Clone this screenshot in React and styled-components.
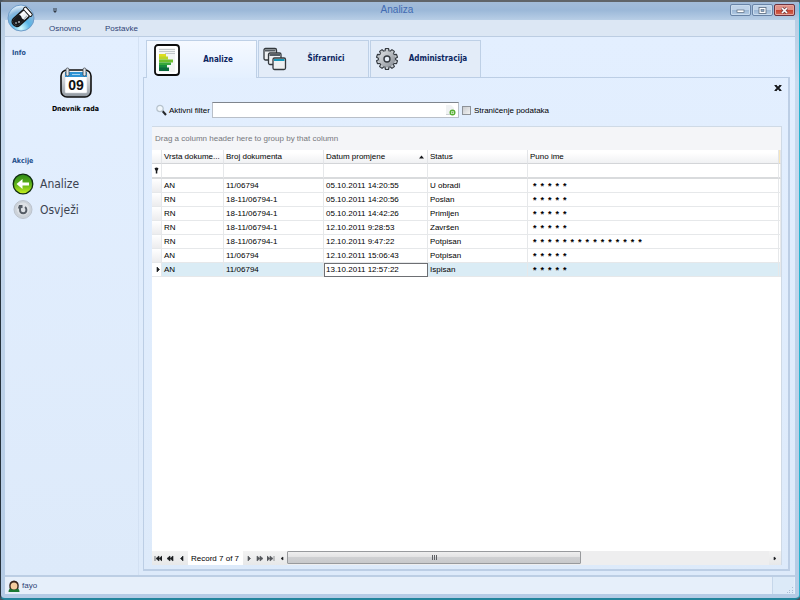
import React from "react";
import styled, { createGlobalStyle } from "styled-components";

const sans = '"Liberation Sans", Arial, sans-serif';
const tahoma = '"DejaVu Sans Condensed", "Noto Sans", sans-serif';

const Global = createGlobalStyle`
  *, *::before, *::after { box-sizing: border-box; }
  body { margin: 0; background: #4a5560; font-family: ${sans}; font-size: 8px; color: #000; }
  button, input { font: inherit; color: inherit; }
  button { background: none; border: 0; padding: 0; margin: 0; display: flex; align-items: center; }
  svg { display: block; flex: none; }
  h1, h2 { margin: 0; }
`;

const Window = styled.div`
  height: 100vh;
  display: flex;
  flex-direction: column;
  padding: 0 4px 4px 4px;
  border: 1px solid #26323c;
  border-top: 2px solid #606468;
  border-right-color: #28b4d0;
  border-bottom: 2px solid #23859c;
  border-radius: 5px;
  background: linear-gradient(#a4bfdb 0, #b8cde3 18px, #c8daee 80px, #b4cbe5 100%);
`;

const TitleBar = styled.header`
  position: relative;
  display: flex;
  justify-content: center;
  height: 18px;
  margin: 0 -4px;
  padding: 1px 10px 3px 4px;
  background: linear-gradient(#a3bcd8, #9bb8d8 45%, #b8cee6);
`;

const Title = styled.h1`
  font-size: 10px;
  line-height: 14px;
  font-weight: 400;
  color: #426bb2;
`;

const Orb = styled.button`
  position: absolute;
  left: 6px;
  top: 2px;
`;

const QuickMenu = styled.button`
  position: absolute;
  left: 51px;
  top: 6px;
`;

const Controls = styled.div`
  position: absolute;
  right: 4px;
  top: 2px;
  display: flex;
  gap: 1px;
`;

const ControlButton = styled.button`
  width: 21px;
  height: 12px;
  justify-content: center;
  border: 1px solid ${(p) => (p.$danger ? "#6e3440" : "#6984a7")};
  border-radius: 2px;
  box-shadow: inset 0 0 0 1px ${(p) => (p.$danger ? "#e6a59c" : "#c9dbed")};
  background: ${(p) =>
    p.$danger
      ? "linear-gradient(#df9187 45%, #c4402f 50%, #d56a54)"
      : "linear-gradient(#bed2e8 45%, #9bb6d4 50%, #b3cce6)"};
`;

const Menu = styled.nav`
  display: flex;
  gap: 24px;
  height: 17px;
  padding-left: 44px;
  border-bottom: 1px solid #bccde2;
  background: #dce7f4;
`;

const MenuItem = styled.button`
  padding-top: 2px;
  line-height: 14px;
  color: #2d4274;
`;

const Content = styled.div`
  flex: 1;
  min-height: 0;
  display: flex;
  background: linear-gradient(#e3efff, #ddeafa);
`;

const Sidebar = styled.aside`
  width: 134px;
  flex: none;
  padding: 11px 0 0 7px;
  border-right: 1px solid #d3e1f3;
`;

const GroupTitle = styled.h2`
  font: 700 7px/10px ${tahoma};
  color: #24508c;
`;

const DiaryButton = styled.button`
  flex-direction: column;
  gap: 5px;
  width: 127px;
  margin: 9px 0 42px;
  font: 700 7px/10px ${tahoma};
  color: #000;
`;

const ActionButton = styled.button`
  gap: 6px;
  height: 26px;
  font: 400 12px/16px ${tahoma};
  color: #3c4350;
`;

const ActionList = styled.div`
  padding-top: 5px;
`;

const Main = styled.main`
  flex: 1;
  min-width: 0;
  display: flex;
  flex-direction: column;
  padding: 3px 5px 4px 4px;
`;

const Tabs = styled.div`
  display: flex;
  gap: 1px;
  padding-left: 3px;
`;

const Tab = styled.button`
  position: relative;
  width: 111px;
  height: ${(p) => (p.$active ? "38px" : "37px")};
  margin-bottom: ${(p) => (p.$active ? "-1px" : "0")};
  padding: ${(p) => (p.$active ? "0 0 0 7px" : "0 3px 0 4px")};
  border: 1px solid #bed0e6;
  border-bottom: 0;
  background: ${(p) => (p.$active ? "linear-gradient(#f5f9ff, #e4f0ff)" : "#e3ecf8")};
  font: 700 8px/12px ${tahoma};
  color: #0b2560;
`;

const TabText = styled.span`
  flex: 1;
  text-align: center;
`;

const Panel = styled.section`
  flex: 1;
  min-height: 0;
  display: flex;
  flex-direction: column;
  padding: 6px 6px 4px 8px;
  border: 1px solid #bccee5;
  border-right-width: 2px;
  border-bottom-width: 2px;
`;

const PanelClose = styled.button`
  align-self: flex-end;
`;

const FilterRow = styled.div`
  display: flex;
  align-items: center;
  margin: 10px 0 8px;
  padding-left: 4px;
`;

const FilterLabel = styled.label`
  margin: 0 2px;
`;

const FilterBox = styled.div`
  display: flex;
  align-items: center;
  width: 247px;
  height: 16px;
  padding-right: 2px;
  border: 1px solid #b9bfc8;
  border-top-color: #7f858d;
  background: #fff;
`;

const FilterInput = styled.input`
  flex: 1;
  min-width: 0;
  height: 12px;
  padding: 0 2px;
  border: 0;
  outline: 0;
  background: none;
`;

const Check = styled.input`
  appearance: none;
  width: 9px;
  height: 9px;
  margin: 0 3px;
  border: 1px solid #8d9298;
  background: linear-gradient(135deg, #c9ccd0, #f2f2f2);
  &:checked { background: #4878b8; }
`;

const Grid = styled.div`
  flex: 1;
  min-height: 0;
  display: flex;
  flex-direction: column;
  border: 1px solid #cfdae6;
  border-left: 0;
  border-bottom: 0;
  background: #fff;
`;

const GroupPanel = styled.div`
  padding: 0 3px;
  line-height: 23px;
  background: #f4f5f8;
  color: #76787d;
`;

const Table = styled.table`
  width: 100%;
  table-layout: fixed;
  border-collapse: separate;
  border-spacing: 0;
`;

const Col = styled.col`
  width: ${(p) => p.$w};
`;

const Th = styled.th`
  height: 14px;
  padding: 0 0 0 2px;
  font-weight: 400;
  line-height: 13px;
  text-align: left;
  white-space: nowrap;
  overflow: hidden;
  border-right: 1px solid #e3e5e8;
  border-bottom: 1px solid #d3d5d8;
  background: ${(p) => (p.$tail ? "#f7e6bd" : "linear-gradient(#fff 20%, #f0f1f3)")};
`;

const HeadInner = styled.span`
  display: flex;
  align-items: center;
  justify-content: space-between;
  padding-right: 3px;
`;

const Td = styled.td`
  height: ${(p) => (p.$filter ? "15px" : "14px")};
  padding: ${(p) => (p.$focus ? "0 1px" : "0 2px")};
  line-height: 12px;
  white-space: nowrap;
  overflow: hidden;
  border-right: 1px solid #e6e8ea;
  border-bottom: ${(p) => (p.$filter ? "2px solid #d9dbdd" : "1px solid #e6e8ea")};
  background: ${(p) => (p.$selected && !p.$focus ? "#daecf5" : "#fff")};
  ${(p) => p.$focus && "border: 1px solid #6d6f73;"}
`;

const Marker = styled(Td)`
  padding: 0 0 0 2px;
  background: ${(p) => (p.$filter || p.$selected ? "#fff" : "linear-gradient(#fff, #ececee)")};
`;

const Stars = styled.span`
  display: flex;
  gap: 4px;
  padding-left: 3px;
  font-size: 9px;
  line-height: 12px;
`;

const NavBar = styled.div`
  display: flex;
  align-items: stretch;
  height: 14px;
  margin-top: auto;
  background: #eeeeef;
`;

const NavButton = styled.button`
  width: ${(p) => p.$w || "12px"};
  justify-content: center;
  background: linear-gradient(#f3f3f3, #e7e8e9);
`;

const Record = styled.span`
  padding: 0 4px 0 3px;
  line-height: 15px;
  white-space: nowrap;
  background: #fff;
`;

const Track = styled.div`
  flex: 1;
  display: flex;
`;

const Thumb = styled.div`
  width: 61%;
  display: flex;
  align-items: center;
  justify-content: center;
  margin-bottom: 1px;
  border: 1px solid #989a9d;
  border-radius: 1px;
  background: linear-gradient(#efefef 0, #e3e3e4 45%, #cfd0d2 50%, #c8c9cb);
`;

const Status = styled.footer`
  display: flex;
  align-items: center;
  gap: 2px;
  height: 19px;
  padding: 0 1px 0 3px;
  border-top: 2px solid #bccee4;
  background: #e6effa;
  color: #2d4274;
`;

const Grip = styled.div`
  display: flex;
  align-items: flex-end;
  justify-content: flex-end;
  align-self: stretch;
  width: 22px;
  margin-left: auto;
  border-left: 1px solid #c6d7ea;
  background: #dceaf8;
`;

const OrbIcon = () => (
  <svg width="28" height="28" viewBox="0 0 28 28">
    <defs>
      <radialGradient id="orb" cx="50%" cy="90%" r="85%">
        <stop offset="0" stopColor="#d4fbff" />
        <stop offset=".4" stopColor="#58b5e6" />
        <stop offset=".75" stopColor="#86b6dc" />
        <stop offset="1" stopColor="#dcecf8" />
      </radialGradient>
    </defs>
    <circle cx="14" cy="14" r="13" fill="url(#orb)" stroke="#6e9cc9" />
    <g transform="rotate(48 14 14)">
      <rect x="9.500" y="4" width="9" height="20" rx="4" fill="#eef3f5" stroke="#141414" strokeWidth="1.500" />
      <path d="M10 13.500l2-1 3 1 3-1V20q0 3.500-4 3.500T10 20z" fill="#191a1c" />
      <rect x="8.500" y="3" width="11" height="3.500" rx="1.500" fill="#fff" stroke="#141414" />
      <path d="M12 7.500v5" stroke="#fff" strokeWidth="1.500" />
      <path d="M16.500 8v4" stroke="#9fa9af" />
    </g>
    <circle cx="12" cy="18" r="1" fill="#aeb7bb" />
    <circle cx="9" cy="19" r="1" fill="#8e979b" />
  </svg>
);

const CalendarIcon = () => (
  <svg width="34" height="32" viewBox="0 0 34 32">
    <defs>
      <linearGradient id="cal" x1="0" y1="0" x2="0" y2="1">
        <stop offset="0" stopColor="#f8f9fa" />
        <stop offset="1" stopColor="#8f979f" />
      </linearGradient>
    </defs>
    <rect x="2" y="3" width="30" height="27" rx="6" fill="url(#cal)" stroke="#111" strokeWidth="1.600" />
    <path d="M6 6h22v19q0 1-1 1H7q-1 0-1-1z" fill="#fff" stroke="#c5cad0" strokeWidth=".5" />
    <path d="M6 5h22v5H6z" fill="#2f93d4" />
    <path d="M13 7.500h8" stroke="#a8d4ef" />
    <rect x="7" y="1" width="3" height="8" rx="1.500" fill="#e1e5e9" stroke="#3d4247" strokeWidth=".8" />
    <rect x="24" y="1" width="3" height="8" rx="1.500" fill="#e1e5e9" stroke="#3d4247" strokeWidth=".8" />
    <text x="17" y="23" textAnchor="middle" fontFamily="Liberation Sans" fontWeight="700" fontSize="14" fill="#111">09</text>
  </svg>
);

const BackIcon = () => (
  <svg width="22" height="22" viewBox="0 0 22 22">
    <defs>
      <linearGradient id="green" x1="0" y1="0" x2="0" y2="1">
        <stop offset="0" stopColor="#2d8a16" />
        <stop offset=".5" stopColor="#5cb019" />
        <stop offset="1" stopColor="#c9f21e" />
      </linearGradient>
    </defs>
    <circle cx="11" cy="11" r="9.800" fill="url(#green)" stroke="#102d10" strokeWidth="1.300" />
    <path d="M4.500 11l6-5v3.500H17v3h-6.500V16z" fill="#fff" />
  </svg>
);

const RefreshIcon = () => (
  <svg width="22" height="22" viewBox="0 0 22 22">
    <circle cx="11" cy="10.500" r="9" fill="#ccd2d9" stroke="#bcc3cd" />
    <circle cx="11" cy="10" r="6.500" fill="#dde1e6" />
    <path d="M8 8.500v2.500q0 3.200 3.200 3.200t3.200-3.200q0-2-1.400-3" fill="none" stroke="#555c65" strokeWidth="1.900" />
    <path d="M5.800 9.500L7 6h3.500v3z" fill="#555c65" />
  </svg>
);

const ReportIcon = () => (
  <svg width="26" height="32" viewBox="0 0 26 32">
    <rect x="1" y="1" width="24" height="30" rx="3" fill="#fff" stroke="#0c0c0c" strokeWidth="1.800" />
    <path d="M5 4h16v24H5z" fill="#f3f5f3" />
    <path d="M5 5.500h16M5 7.500h16M11 9.500h10" stroke="#c3c8ca" />
    <path d="M5 10h7v3H5z" fill="#dede20" />
    <path d="M5 12.500h9v3H5z" fill="#bcd52a" />
    <path d="M5 15.500h14v3H5z" fill="#6fbe2c" />
    <path d="M5 18.500h12v2.500H5z" fill="#37a83a" />
    <path d="M5 21h8v3H5z" fill="#178c3e" />
    <path d="M5 23.500h10V27H5z" fill="#0b6b3b" />
  </svg>
);

const WindowsIcon = () => (
  <svg width="24" height="24" viewBox="0 0 24 24">
    {[[1, 1.5, "#555c63"], [5.5, 6, "#555c63"], [10, 11, "#1596b8"]].map(([x, y, c]) => (
      <g key={x}>
        <rect x={x} y={y} width="12.500" height="11.500" rx="1.500" fill="#eef0f2" stroke="#33383d" strokeWidth="1.300" />
        <path d={`M${x + 1} ${y + 2}h10.500`} stroke={c} strokeWidth="2" />
      </g>
    ))}
  </svg>
);

const GearIcon = () => (
  <svg width="24" height="24" viewBox="0 0 24 24">
    <defs>
      <linearGradient id="gear" x1="0" y1="0" x2="1" y2="1">
        <stop offset="0" stopColor="#e0e3e6" />
        <stop offset="1" stopColor="#858b93" />
      </linearGradient>
    </defs>
    {[0, 36, 72, 108, 144, 180, 216, 252, 288, 324].map((a) => (
      <path key={a} d="M9.700 5l.8-3.500h3L14.300 5z" fill="#c3c8cd" stroke="#353a40" strokeWidth="1.200" strokeLinejoin="round" transform={`rotate(${a} 12 12)`} />
    ))}
    <circle cx="12" cy="12" r="8" fill="url(#gear)" />
    <circle cx="12" cy="12" r="3" fill="#e8f0fa" stroke="#353a40" strokeWidth="1.400" />
  </svg>
);

const SearchIcon = () => (
  <svg width="11" height="12" viewBox="0 0 11 12">
    <path d="M6.500 7l3.500 4" stroke="#26282b" strokeWidth="2" />
    <circle cx="4" cy="4.500" r="3.200" fill="#f1f7fc" stroke="#b7c3cd" strokeWidth="1.200" />
  </svg>
);

const AddIcon = () => (
  <svg width="11" height="12" viewBox="0 0 11 12">
    <path d="M1 1h5l3 3v7H1z" fill="#f0f2f3" />
    <path d="M1 10.500h6" stroke="#ccd1d3" />
    <circle cx="7.500" cy="8.500" r="2.300" fill="#fff" stroke="#55ae32" strokeWidth="1.400" />
    <path d="M7.500 7.500v2M6.500 8.500h2" stroke="#6cb84b" />
  </svg>
);

const UserIcon = () => (
  <svg width="12" height="12" viewBox="0 0 12 12">
    <path d="M.5 12q0-3.500 3-4h5q3 .5 3 4z" fill="#1b7a33" />
    <path d="M1.500 8.500Q0 1 6 .5 12 1 10.500 8.500L8 9.500H4z" fill="#38241c" />
    <ellipse cx="6" cy="6" rx="3.400" ry="3.500" fill="#f5cd9f" />
  </svg>
);

const CrossIcon = () => (
  <svg width="8" height="8" viewBox="0 0 8 8">
    <path d="M1.500 1.500l5 5M6.500 1.500l-5 5" stroke="#16181b" strokeWidth="1.800" />
    <path d="M.5 1.500h2M5.500 1.500h2M.5 6.500h2M5.500 6.500h2" stroke="#16181b" />
  </svg>
);

const glyphs = {
  first: "M1 1v5M5 1L2 3.500 5 6zM8 1L5 3.500 8 6z",
  prevPage: "M4 1L1 3.500 4 6zM7 1L4 3.500 7 6z",
  prev: "M5 1L2.500 3.500 5 6z",
  next: "M3 1l2.500 2.500L3 6z",
  nextPage: "M1 1l3 2.500L1 6zM4 1l3 2.500L4 6z",
  last: "M7 1v5M0 1l3 2.500L0 6zM3 1l3 2.500L3 6z",
  small: "M5 2L3 3.500 5 5z",
  smallNext: "M3 2l2 1.500L3 5z",
};

const Glyph = ({ name, color = "#1a1c1f" }) => (
  <svg width="8" height="7" viewBox="0 0 8 7">
    <path d={glyphs[name]} fill={color} stroke={color} strokeWidth=".6" />
  </svg>
);

const rows = [
  ["AN", "11/06794", "05.10.2011 14:20:55", "U obradi", 5],
  ["RN", "18-11/06794-1", "05.10.2011 14:20:56", "Poslan", 5],
  ["RN", "18-11/06794-1", "05.10.2011 14:42:26", "Primljen", 5],
  ["RN", "18-11/06794-1", "12.10.2011 9:28:53", "Završen", 5],
  ["RN", "18-11/06794-1", "12.10.2011 9:47:22", "Potpisan", 15],
  ["AN", "11/06794", "12.10.2011 15:06:43", "Potpisan", 5],
  ["AN", "11/06794", "13.10.2011 12:57:22", "Ispisan", 5],
];

const tabs = [
  ["Analize", ReportIcon],
  ["Šifrarnici", WindowsIcon],
  ["Administracija", GearIcon],
];

export default function App() {
  return (
    <>
      <Global />
      <Window>
        <TitleBar>
          <Title>Analiza</Title>
          <Orb aria-label="Menu"><OrbIcon /></Orb>
          <QuickMenu aria-label="Quick access">
            <svg width="6" height="6" viewBox="0 0 6 6"><path d="M1 1h4" stroke="#333a44" /><path d="M.8 2.500h4.400L3 5z" fill="#333a44" /></svg>
          </QuickMenu>
          <Controls>
            <ControlButton aria-label="Minimize">
              <svg width="9" height="7" viewBox="0 0 9 7"><rect x="1" y="3" width="7" height="2.500" fill="#fff" stroke="#56687e" strokeWidth=".7" /></svg>
            </ControlButton>
            <ControlButton aria-label="Maximize">
              <svg width="9" height="7" viewBox="0 0 9 7"><rect x="1" y=".5" width="7" height="6" fill="#fff" stroke="#56687e" strokeWidth=".8" /><rect x="3" y="2.500" width="3" height="2" fill="#8da7c5" stroke="#56687e" strokeWidth=".6" /></svg>
            </ControlButton>
            <ControlButton $danger aria-label="Close">
              <svg width="9" height="7" viewBox="0 0 9 7"><path d="M2 1l5 5M7 1L2 6" stroke="#6b3f45" strokeWidth="3" /><path d="M2 1l5 5M7 1L2 6" stroke="#fff" strokeWidth="1.700" /></svg>
            </ControlButton>
          </Controls>
        </TitleBar>
        <Menu>
          <MenuItem>Osnovno</MenuItem>
          <MenuItem>Postavke</MenuItem>
        </Menu>
        <Content>
          <Sidebar>
            <GroupTitle>Info</GroupTitle>
            <DiaryButton><CalendarIcon />Dnevnik rada</DiaryButton>
            <GroupTitle>Akcije</GroupTitle>
            <ActionList>
              <ActionButton><BackIcon />Analize</ActionButton>
              <ActionButton><RefreshIcon />Osvježi</ActionButton>
            </ActionList>
          </Sidebar>
          <Main>
            <Tabs role="tablist">
              {tabs.map(([name, Icon], i) => (
                <Tab key={name} role="tab" aria-selected={i === 0} $active={i === 0}>
                  <Icon />
                  <TabText>{name}</TabText>
                </Tab>
              ))}
            </Tabs>
            <Panel>
              <PanelClose aria-label="Close tab"><CrossIcon /></PanelClose>
              <FilterRow>
                <SearchIcon />
                <FilterLabel htmlFor="filter">Aktivni filter</FilterLabel>
                <FilterBox>
                  <FilterInput id="filter" />
                  <button aria-label="Add filter"><AddIcon /></button>
                </FilterBox>
                <Check type="checkbox" id="paging" />
                <label htmlFor="paging">Straničenje podataka</label>
              </FilterRow>
              <Grid>
                <GroupPanel>Drag a column header here to group by that column</GroupPanel>
                <Table>
                  <colgroup>
                    <Col $w="10px" /><Col $w="62px" /><Col $w="100px" /><Col $w="104px" /><Col $w="100px" /><Col $w="auto" /><Col $w="2px" />
                  </colgroup>
                  <thead>
                    <tr>
                      <Th />
                      <Th>Vrsta dokume...</Th>
                      <Th>Broj dokumenta</Th>
                      <Th aria-sort="ascending">
                        <HeadInner>
                          Datum promjene
                          <svg width="5" height="4" viewBox="0 0 5 4"><path d="M0 3.500L2.500.5 5 3.500z" fill="#17191c" /></svg>
                        </HeadInner>
                      </Th>
                      <Th>Status</Th>
                      <Th>Puno ime</Th>
                      <Th $tail />
                    </tr>
                  </thead>
                  <tbody>
                    <tr>
                      <Marker $filter>
                        <svg width="5" height="7" viewBox="0 0 5 7"><path d="M.5 1.500Q2.500-.5 4.500 1.500L3.300 4V6.500H1.800V4z" fill="#17191c" /></svg>
                      </Marker>
                      {[1, 2, 3, 4, 5, 6].map((n) => <Td key={n} $filter />)}
                    </tr>
                    {rows.map(([kind, num, date, status, stars], i) => {
                      const selected = i === rows.length - 1;
                      return (
                        <tr key={i}>
                          <Marker $selected={selected}>{selected && <Glyph name="next" />}</Marker>
                          <Td $selected={selected}>{kind}</Td>
                          <Td $selected={selected}>{num}</Td>
                          <Td $selected={selected} $focus={selected}>{date}</Td>
                          <Td $selected={selected}>{status}</Td>
                          <Td $selected={selected}>
                            <Stars>{Array.from({ length: stars }, (_, n) => <b key={n}>*</b>)}</Stars>
                          </Td>
                          <Td $selected={selected} />
                        </tr>
                      );
                    })}
                  </tbody>
                </Table>
                <NavBar>
                  <NavButton aria-label="First"><Glyph name="first" /></NavButton>
                  <NavButton aria-label="Previous page"><Glyph name="prevPage" /></NavButton>
                  <NavButton aria-label="Previous"><Glyph name="prev" /></NavButton>
                  <Record>Record 7 of 7</Record>
                  <NavButton $w="11px" aria-label="Next"><Glyph name="next" color="#55585c" /></NavButton>
                  <NavButton $w="11px" aria-label="Next page"><Glyph name="nextPage" color="#55585c" /></NavButton>
                  <NavButton $w="11px" aria-label="Last"><Glyph name="last" color="#55585c" /></NavButton>
                  <NavButton $w="11px" aria-label="Scroll left"><Glyph name="small" /></NavButton>
                  <Track>
                    <Thumb>
                      <svg width="7" height="5" viewBox="0 0 7 5"><path d="M1.500 0v5M3.500 0v5M5.500 0v5" stroke="#5e6064" /></svg>
                    </Thumb>
                  </Track>
                  <NavButton aria-label="Scroll right"><Glyph name="smallNext" /></NavButton>
                </NavBar>
              </Grid>
            </Panel>
          </Main>
        </Content>
        <Status>
          <UserIcon />
          fayo
          <Grip>
            <svg width="7" height="7" viewBox="0 0 7 7"><path d="M5 0h1v1H5zM5 3h1v1H5zM5 5h1v1H5zM2 3h1v1H2zM2 5h1v1H2zM0 5h1v1H0z" fill="#aabdd3" /></svg>
          </Grip>
        </Status>
      </Window>
    </>
  );
}
